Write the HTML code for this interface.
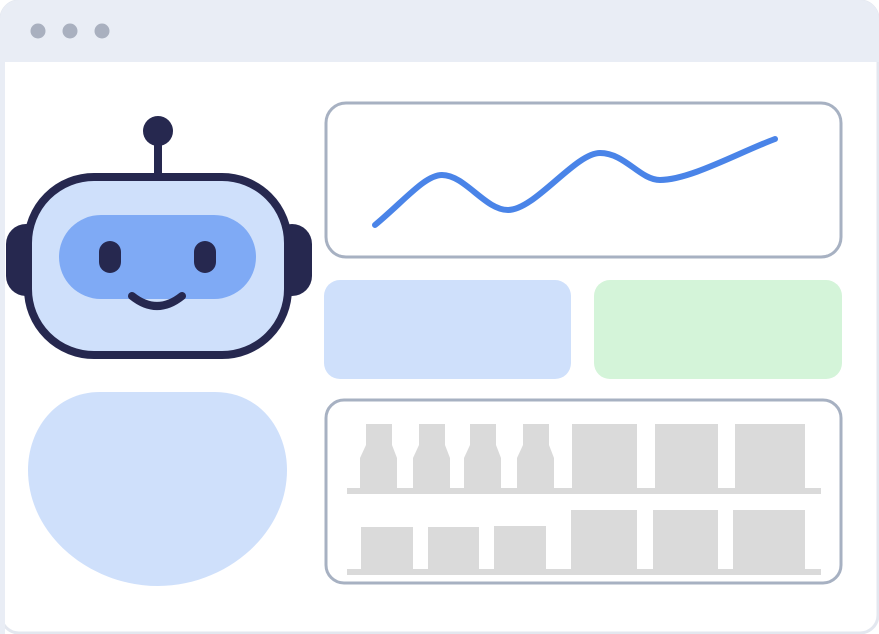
<!DOCTYPE html><html><head><style>html,body{margin:0;padding:0;background:#fff}svg{display:block}</style></head><body>
<svg width="879" height="634" viewBox="0 0 879 634" xmlns="http://www.w3.org/2000/svg">
<rect x="1" y="1" width="877" height="632" rx="18" fill="#fff" stroke="#e3e7ef" stroke-width="3"/>
<path d="M19 0 H860 A19 19 0 0 1 879 19 V62 H0 V19 A19 19 0 0 1 19 0 Z" fill="#e9edf5"/>
<rect x="0" y="62" width="5" height="572" fill="#e9edf5"/>
<circle cx="38" cy="31" r="7.5" fill="#a9b0bf"/><circle cx="70" cy="31" r="7.5" fill="#a9b0bf"/><circle cx="102" cy="31" r="7.5" fill="#a9b0bf"/>
<!-- robot -->
<rect x="154" y="140" width="8" height="38" fill="#26284f"/>
<circle cx="158" cy="131" r="15" fill="#26284f"/>
<rect x="6" y="224" width="40" height="72" rx="20" fill="#26284f"/>
<rect x="272" y="224" width="40" height="72" rx="20" fill="#26284f"/>
<rect x="28" y="177" width="260" height="178" rx="66" fill="#cfe0fb" stroke="#26284f" stroke-width="8"/>
<rect x="59" y="215" width="197" height="84" rx="42" fill="#7faaf5"/>
<rect x="99" y="241" width="22" height="32" rx="11" fill="#26284f"/>
<rect x="194" y="241" width="22" height="32" rx="11" fill="#26284f"/>
<path d="M132 296 Q157 316 182 296" fill="none" stroke="#26284f" stroke-width="8" stroke-linecap="round"/>
<path d="M100 392 H215 C260 392 287 430 287 470 C287 535 225 586 158 586 C90 586 28 535 28 470 C28 430 55 392 100 392 Z" fill="#cfe0fb"/>
<!-- chart -->
<rect x="326" y="103" width="515" height="154" rx="20" fill="#fff" stroke="#a7b1c2" stroke-width="3"/>
<path d="M375 225 C405 200 425 175 442 175 C465 175 485 210 508 210 C535 210 575 153 600 153 C625 153 640 180 660 180 C690 180 740 152 775 139" fill="none" stroke="#4a84e8" stroke-width="6" stroke-linecap="round"/>
<rect x="324" y="280" width="247" height="99" rx="16" fill="#cfe0fb"/>
<rect x="594" y="280" width="248" height="99" rx="16" fill="#d4f4d9"/>
<!-- shelf -->
<rect x="326" y="400" width="515" height="183" rx="18" fill="#fff" stroke="#a7b1c2" stroke-width="3"/>
<g fill="#dadada">
<rect x="347" y="488" width="474" height="6"/>
<rect x="347" y="569" width="474" height="6"/>
<path id="b" d="M366 424 H392 V445 L397 458 V489 H360 V458 L366 445 Z"/>
<use href="#b" x="53"/><use href="#b" x="104"/><use href="#b" x="157"/>
<rect x="572" y="424" width="65" height="65"/>
<rect x="655" y="424" width="63" height="65"/>
<rect x="735" y="424" width="70" height="65"/>
<rect x="361" y="527" width="52" height="42"/>
<rect x="428" y="527" width="51" height="42"/>
<rect x="494" y="526" width="52" height="43"/>
<rect x="571" y="510" width="66" height="59"/>
<rect x="653" y="510" width="65" height="59"/>
<rect x="733" y="510" width="72" height="59"/>
</g>
</svg>
</body></html>
